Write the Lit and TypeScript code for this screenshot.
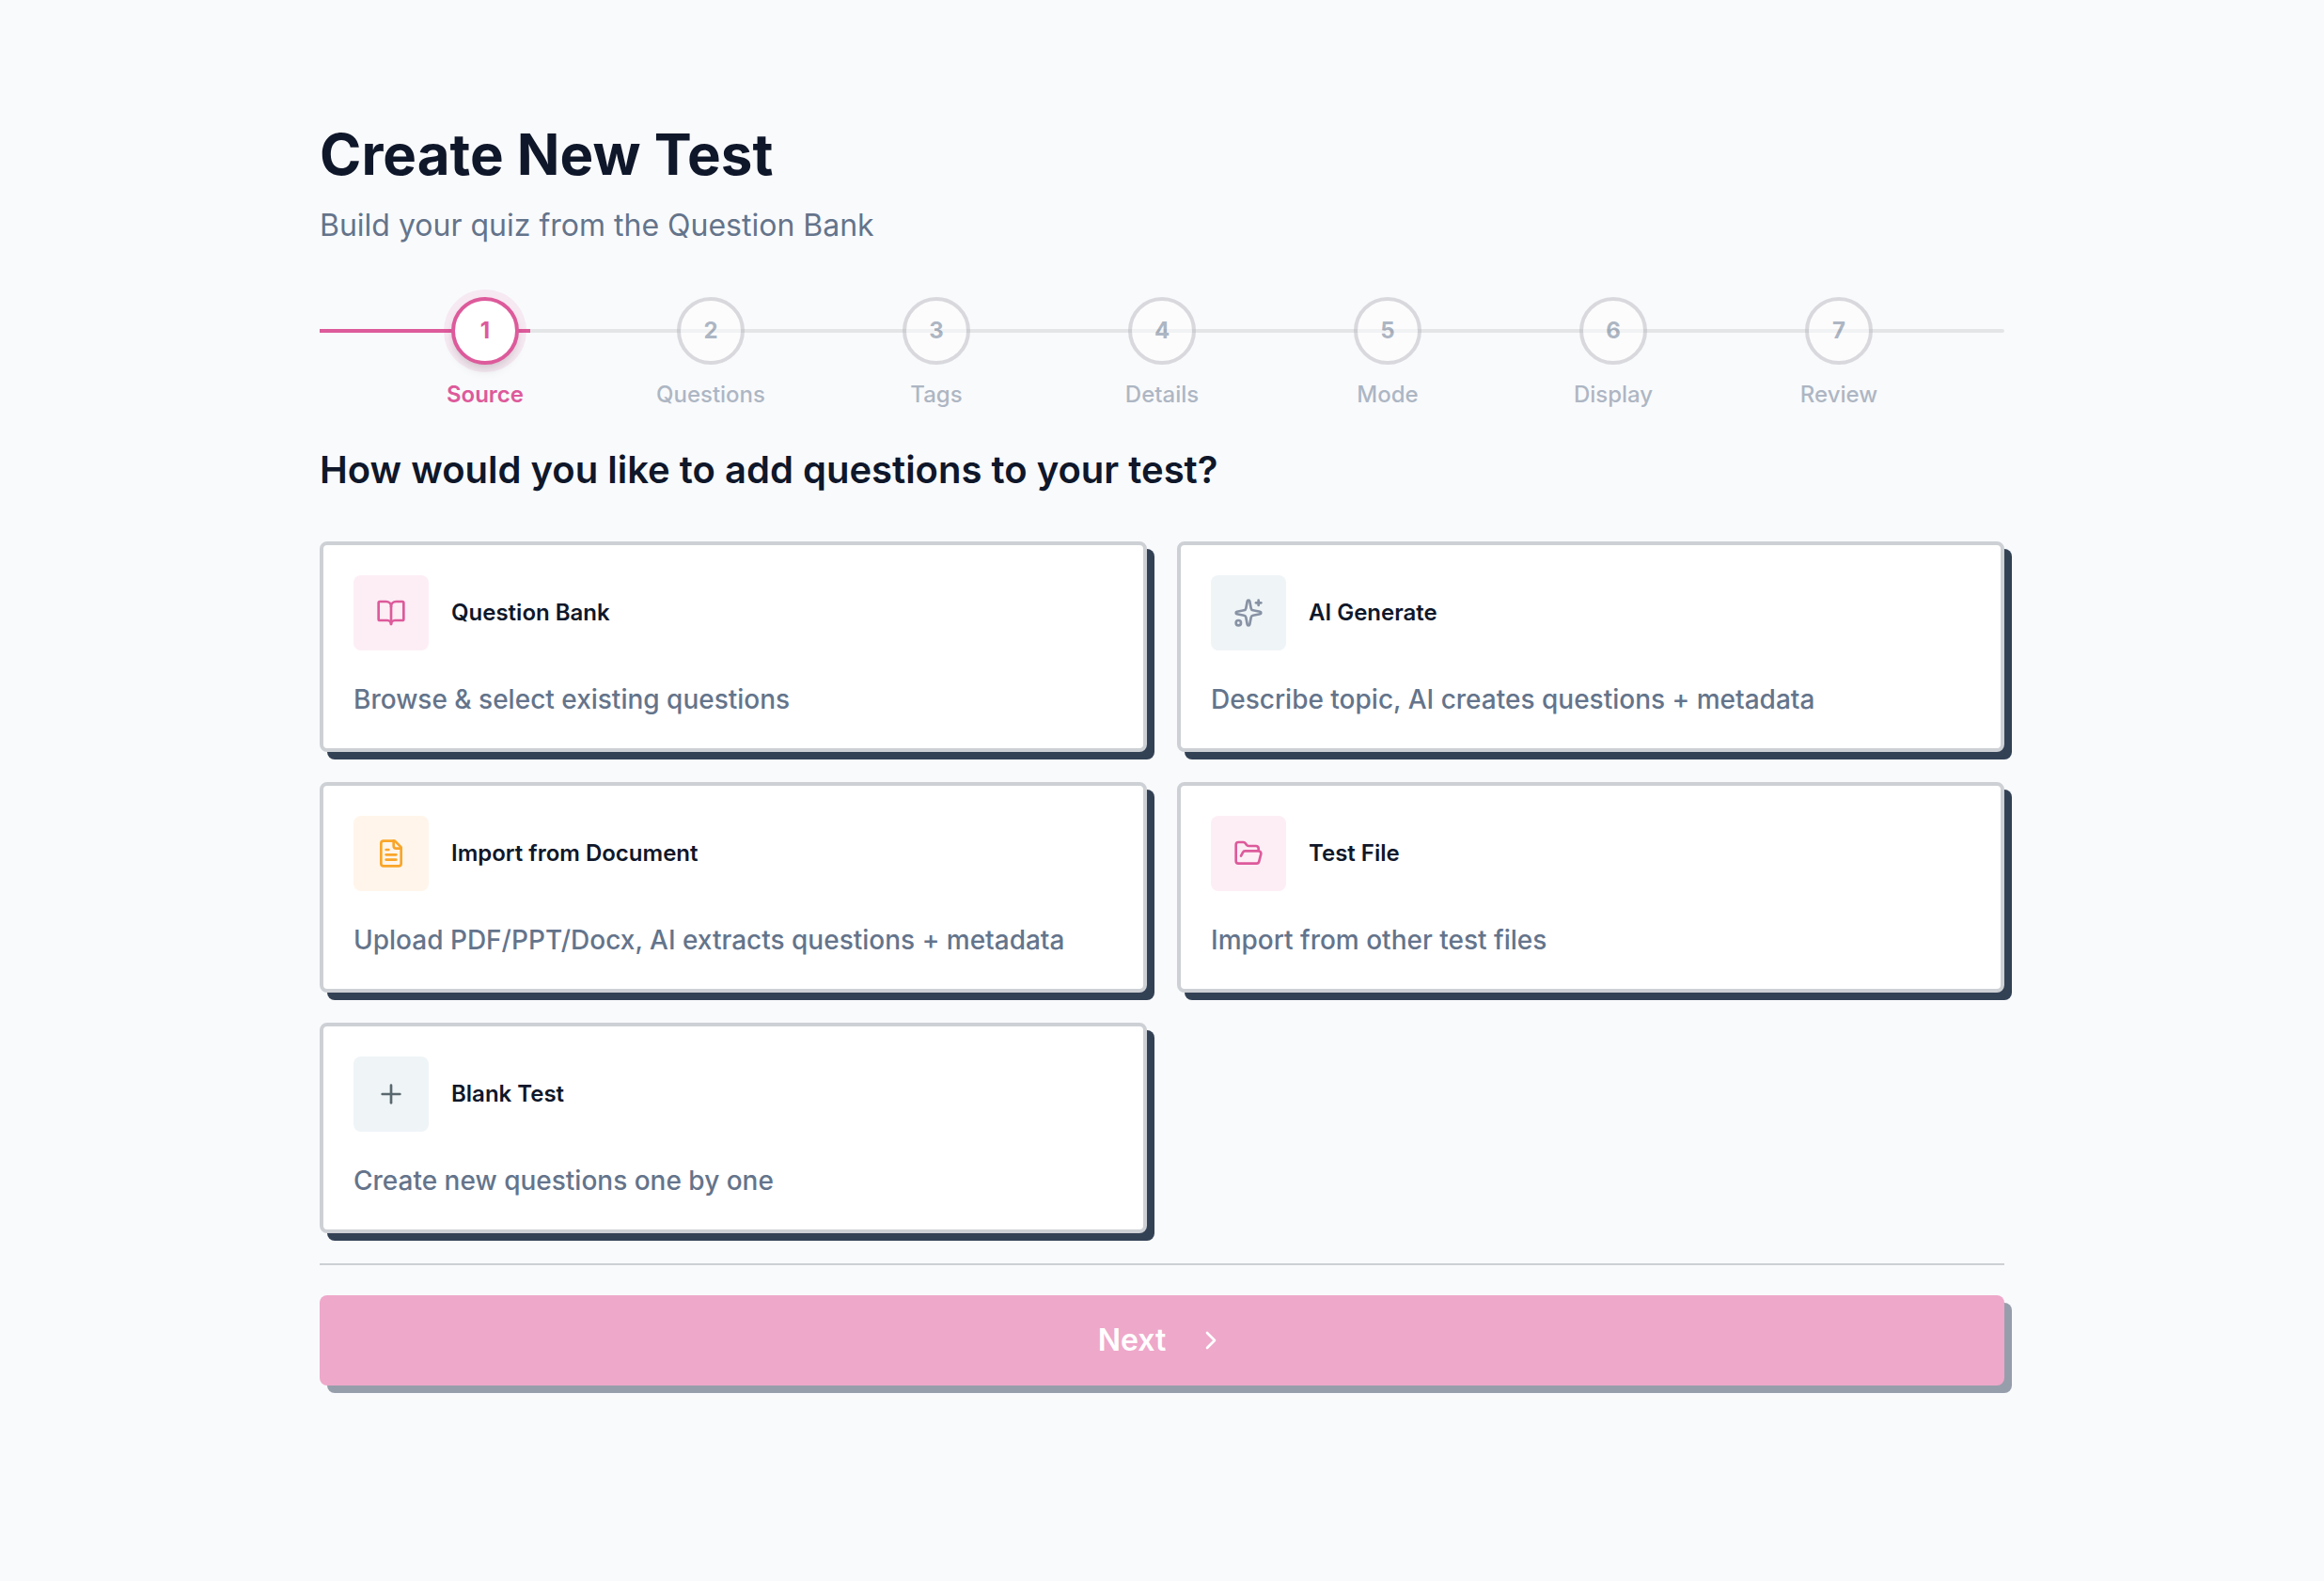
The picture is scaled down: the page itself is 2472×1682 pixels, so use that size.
import { LitElement, html, css, svg } from "lit";
import { customElement, property, state } from "lit/decorators.js";
import { classMap } from "lit/directives/class-map.js";

const icons = {
  book: svg`<path d="M12 7v14"/><path d="M3 18a1 1 0 0 1-1-1V4a1 1 0 0 1 1-1h5a4 4 0 0 1 4 4 4 4 0 0 1 4-4h5a1 1 0 0 1 1 1v13a1 1 0 0 1-1 1h-6a3 3 0 0 0-3 3 3 3 0 0 0-3-3z"/>`,
  sparkles: svg`<path d="M11.017 2.814a1 1 0 0 1 1.966 0l1.051 5.558a2 2 0 0 0 1.594 1.594l5.558 1.051a1 1 0 0 1 0 1.966l-5.558 1.051a2 2 0 0 0-1.594 1.594l-1.051 5.558a1 1 0 0 1-1.966 0l-1.051-5.558a2 2 0 0 0-1.594-1.594l-5.558-1.051a1 1 0 0 1 0-1.966l5.558-1.051a2 2 0 0 0 1.594-1.594z"/><path d="M20 2v4"/><path d="M22 4h-4"/><circle cx="4" cy="20" r="2"/>`,
  document: svg`<path d="M15 2H6a2 2 0 0 0-2 2v16a2 2 0 0 0 2 2h12a2 2 0 0 0 2-2V7Z"/><path d="M14 2v4a2 2 0 0 0 2 2h4"/><path d="M10 9H8"/><path d="M16 13H8"/><path d="M16 17H8"/>`,
  folder: svg`<path d="m6 14 1.5-2.9A2 2 0 0 1 9.24 10H20a2 2 0 0 1 1.94 2.5l-1.54 6a2 2 0 0 1-1.95 1.5H4a2 2 0 0 1-2-2V5a2 2 0 0 1 2-2h3.9a2 2 0 0 1 1.69.9l.81 1.2a2 2 0 0 0 1.67.9H18a2 2 0 0 1 2 2v2"/>`,
  plus: svg`<path d="M5 12h14"/><path d="M12 5v14"/>`,
  chevron: svg`<path d="m9 18 6-6-6-6"/>`,
};

type IconName = keyof typeof icons;
type Tone = "pink" | "slate" | "amber" | "gray";

interface Source {
  icon: IconName;
  tone: Tone;
  title: string;
  text: string;
}

const STEPS = ["Source", "Questions", "Tags", "Details", "Mode", "Display", "Review"];

const SOURCES: Source[] = [
  { icon: "book", tone: "pink", title: "Question Bank", text: "Browse & select existing questions" },
  { icon: "sparkles", tone: "slate", title: "AI Generate", text: "Describe topic, AI creates questions + metadata" },
  { icon: "document", tone: "amber", title: "Import from Document", text: "Upload PDF/PPT/Docx, AI extracts questions + metadata" },
  { icon: "folder", tone: "pink", title: "Test File", text: "Import from other test files" },
  { icon: "plus", tone: "gray", title: "Blank Test", text: "Create new questions one by one" },
];

@customElement("ui-icon")
class UiIcon extends LitElement {
  @property() name: IconName = "plus";

  static styles = css`
    :host {
      display: block;
      width: 32px;
      height: 32px;
    }
    .icon {
      display: block;
      width: 100%;
      height: 100%;
      fill: none;
      stroke: currentColor;
      stroke-width: 2;
      stroke-linecap: round;
      stroke-linejoin: round;
    }
  `;

  render() {
    return html`<svg class="icon" viewBox="0 0 24 24" aria-hidden="true">${icons[this.name]}</svg>`;
  }
}

@customElement("step-progress")
class StepProgress extends LitElement {
  @property({ attribute: false }) steps: string[] = [];
  @property({ type: Number }) current = 0;

  static styles = css`
    :host {
      display: grid;
    }
    .track {
      grid-area: 1 / 1;
      height: 4px;
      margin-top: 34px;
      border-radius: 0 2px 2px 0;
      background: #e4e5e7;
      overflow: hidden;
    }
    .fill {
      height: 100%;
      background: #dd5a9b;
    }
    .steps {
      grid-area: 1 / 1;
      z-index: 1;
      display: flex;
      margin: 0;
      padding: 0 56px;
      list-style: none;
    }
    .step {
      flex: 1;
      display: flex;
      flex-direction: column;
      align-items: center;
      gap: 16px;
      color: #64748b;
      opacity: 0.5;
    }
    .step.active {
      color: #dd5a9b;
      opacity: 1;
    }
    .dot {
      box-sizing: border-box;
      width: 72px;
      height: 72px;
      padding: 0;
      border: 4px solid #babac0;
      border-radius: 50%;
      background: #ffffff;
      color: inherit;
      font: inherit;
      font-size: 24px;
      font-weight: 700;
      line-height: 32px;
    }
    .active .dot {
      border-color: #dd5a9b;
      box-shadow:
        0 8px 12px -2px rgba(0, 0, 0, 0.1),
        0 4px 8px -4px rgba(0, 0, 0, 0.1),
        0 0 0 8px rgba(221, 90, 155, 0.1);
    }
    .label {
      font-size: 24px;
      font-weight: 500;
      line-height: 32px;
    }
    .active .label {
      font-weight: 600;
    }
  `;

  render() {
    const filled = (this.current + 1) / (this.steps.length + 1);
    return html`
      <div class="track"><div class="fill" style="width: ${filled * 100}%"></div></div>
      <ol class="steps">
        ${this.steps.map((label, i) => {
          const active = i === this.current;
          return html`
            <li class=${classMap({ step: true, active })} aria-current=${active ? "step" : "false"}>
              <button class="dot" type="button" aria-labelledby="step-${i}" ?disabled=${i > this.current}>${i + 1}</button>
              <span class="label" id="step-${i}">${label}</span>
            </li>
          `;
        })}
      </ol>
    `;
  }
}

@customElement("source-card")
class SourceCard extends LitElement {
  @property({ attribute: false }) source!: Source;

  static styles = css`
    :host {
      display: block;
    }
    .card {
      box-sizing: border-box;
      display: flex;
      flex-direction: column;
      gap: 32px;
      width: 100%;
      height: 100%;
      padding: 32px;
      border: 4px solid #cdd0d4;
      border-radius: 8px;
      background: #ffffff;
      box-shadow: 8px 8px 0 #334155;
      font: inherit;
      text-align: left;
      cursor: pointer;
    }
    .head {
      display: flex;
      align-items: center;
      gap: 24px;
    }
    .badge {
      flex: none;
      display: grid;
      place-items: center;
      width: 80px;
      height: 80px;
      border-radius: 8px;
    }
    .pink {
      background: #fdeef5;
      color: #dd5a9b;
    }
    .slate {
      background: #eff4f7;
      color: #8792a4;
    }
    .amber {
      background: #fff5ea;
      color: #f9a529;
    }
    .gray {
      background: #eff4f7;
      color: #59686f;
    }
    .title {
      color: #0f172a;
      font-size: 24px;
      font-weight: 600;
      line-height: 32px;
    }
    .text {
      color: #64748b;
      font-size: 28px;
      font-weight: 500;
      line-height: 40px;
    }
  `;

  render() {
    const { icon, tone, title, text } = this.source;
    return html`
      <button class="card" type="button">
        <span class="head">
          <span class="badge ${tone}"><ui-icon name=${icon}></ui-icon></span>
          <span class="title">${title}</span>
        </span>
        <span class="text">${text}</span>
      </button>
    `;
  }
}

@customElement("app-root")
class AppRoot extends LitElement {
  @state() private step = 0;

  static styles = css`
    :host {
      box-sizing: border-box;
      display: block;
      min-height: 100vh;
      padding: 128px 64px;
      background: #f9fafc;
      font-family: Inter, "Liberation Sans", sans-serif;
    }
    .page {
      display: flex;
      flex-direction: column;
      max-width: 1792px;
      margin: 0 auto;
    }
    .heading {
      margin: 0;
      color: #0f172a;
      font-size: 60px;
      font-weight: 700;
      line-height: 72px;
    }
    .lead {
      margin: 16px 0 52px;
      color: #64748b;
      font-size: 32px;
      line-height: 48px;
    }
    .question {
      margin: 40px 0 52px;
      color: #0f172a;
      font-size: 40px;
      font-weight: 600;
      line-height: 48px;
    }
    .sources {
      display: grid;
      grid-template-columns: repeat(2, minmax(0, 1fr));
      gap: 32px;
    }
    .footer {
      margin-top: 32px;
      padding-top: 32px;
      border-top: 2px solid #cdd0d4;
    }
    .next {
      display: flex;
      align-items: center;
      justify-content: center;
      gap: 32px;
      width: 100%;
      height: 96px;
      padding: 0 32px;
      border: 0;
      border-radius: 8px;
      background: #eea8ca;
      box-shadow: 8px 8px 0 #979eab;
      color: #ffffff;
      font: inherit;
      font-size: 32px;
      font-weight: 600;
      line-height: 48px;
    }
  `;

  render() {
    return html`
      <main class="page">
        <h1 class="heading">Create New Test</h1>
        <p class="lead">Build your quiz from the Question Bank</p>
        <step-progress .steps=${STEPS} .current=${this.step}></step-progress>
        <h2 class="question">How would you like to add questions to your test?</h2>
        <section class="sources">
          ${SOURCES.map((s) => html`<source-card .source=${s}></source-card>`)}
        </section>
        <footer class="footer">
          <button class="next" type="button" disabled>
            <span>Next</span>
            <ui-icon name="chevron"></ui-icon>
          </button>
        </footer>
      </main>
    `;
  }
}
